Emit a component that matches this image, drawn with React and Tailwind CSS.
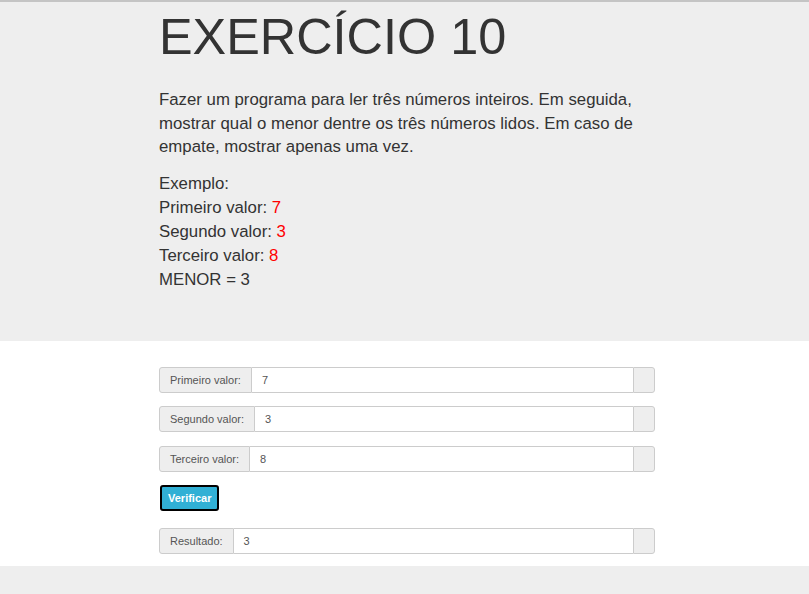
import React from 'react'

function ValueRow({ label, value }) {
  return (
    <div className="flex h-[26px] w-[496px] text-[11px] text-[#555]">
      <span className="flex items-center px-[10px] bg-[#eee] border border-[#ccc] rounded-l-[3px] whitespace-nowrap">
        {label}
      </span>
      <span className="flex-1 flex items-center px-[10px] bg-white border-y border-[#ccc]">
        {value}
      </span>
      <span className="w-[22px] bg-[#eee] border border-[#ccc] rounded-r-[3px]" />
    </div>
  )
}

export default function App() {
  return (
    <div className="w-[809px] h-[594px] bg-[#eee] text-[#333] overflow-hidden" style={{ fontFamily: '"Liberation Sans", Arial, sans-serif' }}>
      {/* Jumbotron */}
      <div className="border-t-2 border-[#c4c4c4] bg-[#eee] pt-[7px] pb-[49px]">
        <div className="ml-[159px] w-[496px]">
          <h1 className="text-[50.4px] leading-[1.1]">EXERCÍCIO 10</h1>
          <p className="mt-[24px] text-[16.8px] leading-[23.5px]">
            Fazer um programa para ler três números inteiros. Em seguida, mostrar qual o menor dentre os três números lidos. Em caso de empate, mostrar apenas uma vez.
          </p>
          <div className="mt-[13px] text-[16.8px] leading-[24px]">
            <div>Exemplo:</div>
            <div>Primeiro valor: <span className="text-[#f00]">7</span></div>
            <div>Segundo valor: <span className="text-[#f00]">3</span></div>
            <div>Terceiro valor: <span className="text-[#f00]">8</span></div>
            <div>MENOR = 3</div>
          </div>
        </div>
      </div>

      {/* Form */}
      <div className="bg-white pt-[26px] pb-[12px]">
        <div className="ml-[159px] flex flex-col">
          <ValueRow label="Primeiro valor:" value="7" />
          <div className="mt-[13px]"><ValueRow label="Segundo valor:" value="3" /></div>
          <div className="mt-[14px]"><ValueRow label="Terceiro valor:" value="8" /></div>
          <div className="mt-[13px] ml-[1px]">
            <button className="h-[26px] px-[6px] rounded-[3px] border-2 border-black bg-[#31b0d5] text-white text-[11px] font-bold">
              Verificar
            </button>
          </div>
          <div className="mt-[17px]"><ValueRow label="Resultado:" value="3" /></div>
        </div>
      </div>
    </div>
  )
}
